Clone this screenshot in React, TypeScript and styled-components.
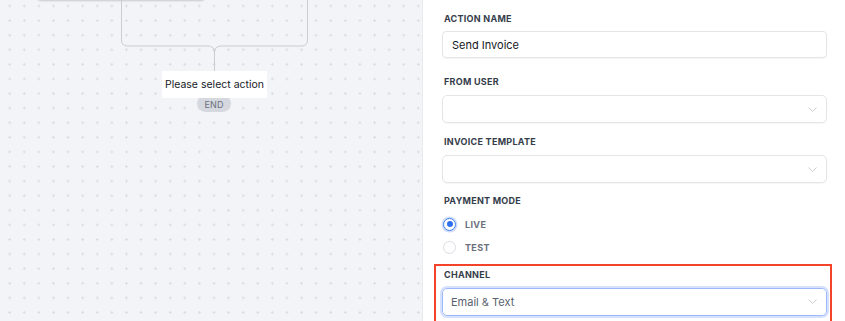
import styled, { createGlobalStyle } from 'styled-components'

const Global = createGlobalStyle`
  html, body {
    margin: 0;
    padding: 0;
    height: 321px;
    overflow: hidden;
    font-family: Inter, "Noto Sans", sans-serif;
    -webkit-font-smoothing: antialiased;
  }
`

const Page = styled.div`
  display: flex;
  width: 845px;
  height: 321px;
  overflow: hidden;
`

const Canvas = styled.div`
  position: relative;
  width: 422px;
  height: 321px;
  flex-shrink: 0;
  background-color: #f3f4f7;
  background-image: radial-gradient(circle, #dcdee3 1.1px, transparent 1.4px);
  background-size: 14.6px 14.6px;
  background-position: 2.4px -1.3px;
  overflow: hidden;
`

const NodeCard = styled.div`
  position: absolute;
  left: 37px;
  top: -40px;
  width: 168px;
  height: 40px;
  background: #ffffff;
  border-radius: 4px;
  box-shadow: 0 1px 2px rgba(0, 0, 0, 0.18);
`

const Wires = styled.svg`
  position: absolute;
  left: 0;
  top: 0;
`

const ActionBox = styled.div`
  position: absolute;
  left: 162px;
  top: 71px;
  width: 105px;
  height: 27px;
  background: #ffffff;
  display: flex;
  align-items: center;
  justify-content: center;
  font-size: 10.5px;
  color: #16191f;
  z-index: 2;
`

const EndPill = styled.div`
  position: absolute;
  left: 197px;
  top: 95px;
  width: 34px;
  height: 17px;
  padding-top: 2px;
  box-sizing: border-box;
  border-radius: 9px;
  background: #d5d8de;
  color: #6b7280;
  font-size: 9px;
  display: flex;
  align-items: center;
  justify-content: center;
  letter-spacing: 0.02em;
`

const Panel = styled.div`
  flex: 1;
  background: #ffffff;
  border-left: 1px solid #e9ebef;
  padding: 13px 18px 0 19px;
  box-sizing: border-box;
`

const Field = styled.div<{ $gap: number }>`
  margin-bottom: ${p => p.$gap}px;
`

const Label = styled.div<{ $space?: number }>`
  font-size: 9px;
  line-height: 12px;
  font-weight: 700;
  letter-spacing: 0.03em;
  color: #353d4b;
  text-transform: uppercase;
  padding-left: 2px;
  margin-bottom: ${p => p.$space ?? 7}px;
`

const TextInput = styled.div`
  height: 27px;
  box-sizing: border-box;
  border: 1px solid #e3e5e9;
  border-radius: 4px;
  box-shadow: 0 1px 1px rgba(0, 0, 0, 0.04);
  padding: 0 9px;
  display: flex;
  align-items: center;
  font-size: 11px;
  color: #141820;
`

const Select = styled.div<{ $focused?: boolean }>`
  height: 28px;
  box-sizing: border-box;
  border: 1px solid ${p => (p.$focused ? '#9db8f8' : '#e3e5e9')};
  border-radius: 5px;
  box-shadow: ${p =>
    p.$focused ? '0 0 0 2px rgba(165, 190, 250, 0.45)' : '0 1px 1px rgba(0, 0, 0, 0.04)'};
  padding: 0 9px 0 8px;
  display: flex;
  align-items: center;
  justify-content: space-between;
  font-size: 11px;
  color: #5a616d;
`

const Chevron = () => (
  <svg width="9" height="5" viewBox="0 0 9 5" fill="none">
    <path d="M0.5 0.5L4.5 4.3L8.5 0.5" stroke="#c4c8ce" strokeWidth="0.9" />
  </svg>
)

const RadioRow = styled.div`
  display: flex;
  align-items: center;
  height: 14px;
  gap: 9px;
  margin-bottom: 9px;
`

const RadioDot = styled.span<{ $checked?: boolean }>`
  width: 13px;
  height: 13px;
  margin-left: 1px;
  box-sizing: border-box;
  border-radius: 50%;
  border: ${p => (p.$checked ? '1.5px solid #3b7bf2' : '1px solid #dadde2')};
  box-shadow: ${p => (p.$checked ? '0 0 0 1.5px #cfdcfb' : 'none')};
  display: flex;
  align-items: center;
  justify-content: center;
  &::after {
    content: '';
    display: ${p => (p.$checked ? 'block' : 'none')};
    width: 6px;
    height: 6px;
    border-radius: 50%;
    background: #2f6fed;
  }
`

const RadioText = styled.span`
  font-size: 9px;
  font-weight: 700;
  letter-spacing: 0.04em;
  color: #6a707c;
  padding-top: 1px;
`

const Highlight = styled.div`
  margin: 10px -5px 0 -8px;
  border: 2px solid #f4432b;
  border-bottom: none;
  padding: 2.5px 3px 10px 6px;
`

export default function App() {
  return (
    <>
      <Global />
      <Page>
        <Canvas>
          <NodeCard />
          <Wires width="422" height="321">
            <path
              d="M121.5 0 V40 Q121.5 46 127.5 46 H208 Q214.5 46 214.5 53 V71"
              stroke="#c9ccd1"
              strokeWidth="1"
              fill="none"
            />
            <path
              d="M307.5 0 V40 Q307.5 46 301.5 46 H221 Q214.5 46 214.5 53"
              stroke="#c9ccd1"
              strokeWidth="1"
              fill="none"
            />
          </Wires>
          <ActionBox>Please select action</ActionBox>
          <EndPill>END</EndPill>
        </Canvas>
        <Panel>
          <Field $gap={18}>
            <Label $space={6}>Action Name</Label>
            <TextInput>Send Invoice</TextInput>
          </Field>
          <Field $gap={13}>
            <Label>From User</Label>
            <Select>
              <span />
              <Chevron />
            </Select>
          </Field>
          <Field $gap={12}>
            <Label>Invoice Template</Label>
            <Select>
              <span />
              <Chevron />
            </Select>
          </Field>
          <Field $gap={0}>
            <Label $space={10}>Payment Mode</Label>
            <RadioRow>
              <RadioDot $checked />
              <RadioText>LIVE</RadioText>
            </RadioRow>
            <RadioRow>
              <RadioDot />
              <RadioText>TEST</RadioText>
            </RadioRow>
          </Field>
          <Highlight>
            <Label>Channel</Label>
            <Select $focused>
              <span>Email &amp; Text</span>
              <Chevron />
            </Select>
          </Highlight>
        </Panel>
      </Page>
    </>
  )
}
